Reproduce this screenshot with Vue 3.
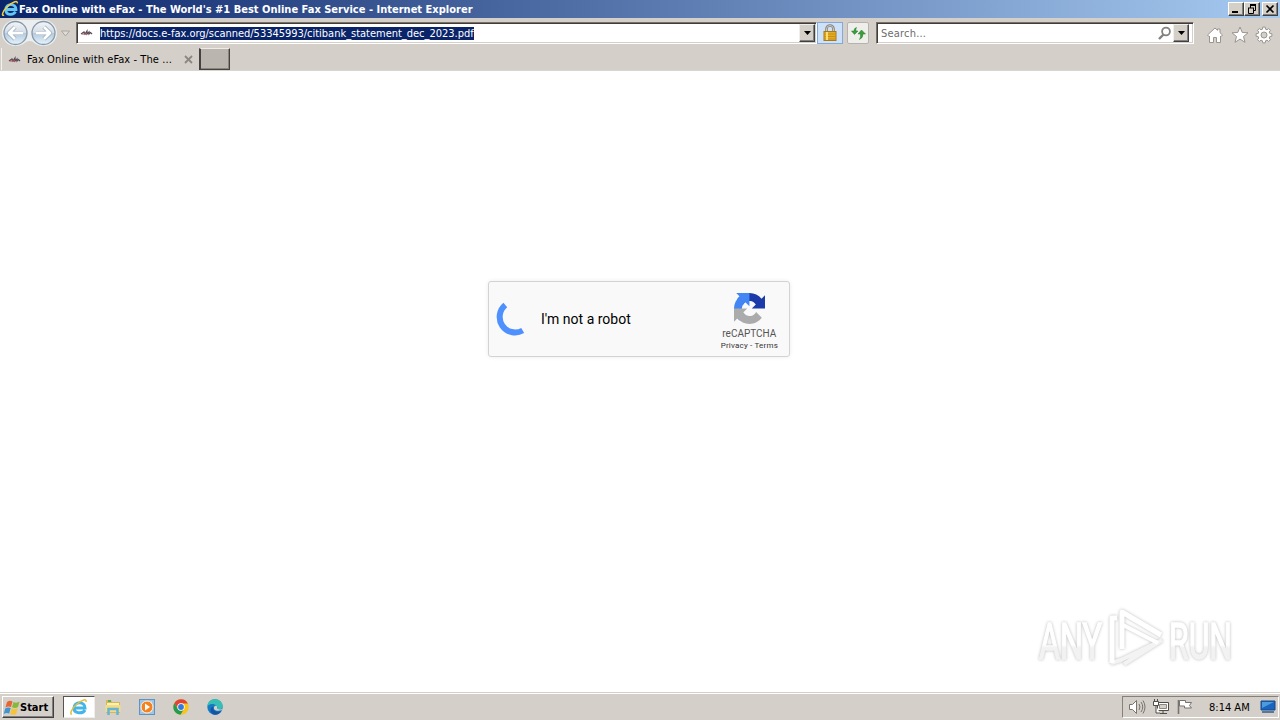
<template>
    <div class="screen">
        <!-- Title bar -->
        <header class="titlebar">
            <svg class="title-icon" width="18" height="18" viewBox="0 0 18 18">
                <path d="M5 9.5H15C15 2.7 4.8 3 4.8 9.7c0 5.7 7.6 6 9.6 2" fill="none" stroke="#62c5f4" stroke-width="2.8" />
                <path d="M3 15C.4 16.7 1 11.7 6 7 11 2 17-.2 16.3 3.3" fill="none" stroke="#f5ce3e" stroke-width="1.5" />
            </svg>
            <span class="title-text">{{ title }} - Internet Explorer</span>
            <div class="window-buttons">
                <button class="win-btn">
                    <svg width="14" height="12"><path d="M3 9h6" stroke="#000" stroke-width="2" /></svg>
                </button>
                <button class="win-btn restore">
                    <svg width="14" height="12"><path d="M5 1.5h6M5 2.5h6M5.5 2v3M10.5 2v5.5H9M3 5h6M3.5 5v5.5h5V5" fill="none" stroke="#000" /></svg>
                </button>
                <button class="win-btn">
                    <svg width="14" height="12"><path d="M3.5 2.5l7 7M10.5 2.5l-7 7" stroke="#000" stroke-width="1.7" /></svg>
                </button>
            </div>
        </header>

        <!-- Address row -->
        <div class="toolbar">
            <svg class="nav-buttons" width="76" height="30" viewBox="0 0 76 30">
                <defs>
                    <linearGradient id="navFill" x1="0" y1="0" x2="0" y2="1">
                        <stop offset="0" stop-color="#f4f6f8" />
                        <stop offset=".48" stop-color="#d5dde5" />
                        <stop offset=".5" stop-color="#b4c8dc" />
                        <stop offset="1" stop-color="#e5f5fc" />
                    </linearGradient>
                </defs>
                <path d="M15 2h29a13 13 0 0 1 0 26q-7 0-11-4-3-2-7 0-4 4-11 4a13 13 0 0 1 0-26" fill="#eceff0" />
                <circle cx="15.500" cy="15" r="11.500" fill="url(#navFill)" stroke="#8799ac" stroke-width="1.300" />
                <circle cx="43.500" cy="15" r="11.500" fill="url(#navFill)" stroke="#8799ac" stroke-width="1.300" />
                <g fill="none" stroke-linejoin="round">
                    <path d="M23 15H9m6-6-6 6 6 6M36 15h14m-6-6 6 6-6 6" stroke="#92a8bf" stroke-width="4.200" />
                    <path d="M23 15H9m6-6-6 6 6 6M36 15h14m-6-6 6 6-6 6" stroke="#fff" stroke-width="2.800" />
                </g>
                <path d="M61.500 13h8l-4 5z" fill="#dfdcd7" stroke="#aaa59f" />
            </svg>
            <div class="field address">
                <svg class="favicon" width="14" height="8" viewBox="0 0 14 8">
                    <path d="M1 5l3-2 1 2 2-3v3l2-2v2l1.500-1.500L12 5" fill="none" stroke="#584a57" stroke-width="1.200" />
                    <path d="M2 5h5" stroke="#b14b50" />
                </svg>
                <span class="url">{{ url }}</span>
                <button class="drop"><svg width="7" height="4"><path d="M0 0h7L3.500 4z" /></svg></button>
            </div>
            <button class="tool lock">
                <svg width="16" height="18" viewBox="0 0 16 18">
                    <path d="M4.500 8V5a3.500 3.500 0 0 1 7 0v3" fill="none" stroke="#858078" stroke-width="2.600" />
                    <path d="M4.500 8V5a3.500 3.500 0 0 1 7 0v3" fill="none" stroke="#dedbd0" stroke-width=".8" />
                    <rect x="2" y="7.500" width="12" height="9" fill="#e6ad24" stroke="#a8791a" />
                    <path d="M2.500 10h11M2.500 12.500h11M2.500 15h11" stroke="#c48f1b" />
                    <path d="M5 8v8" stroke="#ffdc70" stroke-width="2" />
                </svg>
            </button>
            <button class="tool refresh">
                <svg width="16" height="16" viewBox="0 0 16 16">
                    <path d="M6.500 2.500Q4 3 4 6H1.500L4.500 9.500 8 6H6Q5.500 4 6.500 2.500zM9.500 14.500Q13 13 13 9h2.500L11.500 5 8 9h2.500Q11 12 9.500 14.500z" fill="#3b9c3d" stroke="#267e2b" stroke-width=".5" />
                </svg>
            </button>
            <div class="field search">
                <span class="placeholder">Search...</span>
                <svg class="magnifier" width="15" height="15" viewBox="0 0 15 15">
                    <circle cx="9" cy="5.500" r="3.900" fill="#fff" stroke="#85817f" stroke-width="1.800" />
                    <path d="M6.500 8.500L2 13" stroke="#85817f" stroke-width="2.400" />
                </svg>
                <button class="drop"><svg width="7" height="4"><path d="M0 0h7L3.500 4z" /></svg></button>
            </div>
            <div class="commands">
                <svg width="18" height="18" viewBox="0 0 18 18">
                    <path d="M1.500 9L9 2l2.500 2.300V3H14v3.700L16.500 9 15 10.500l-.5-.5v6.500h-4v-5h-3v5h-4V10l-.5.5z" fill="#fff" stroke="#99948f" />
                </svg>
                <svg width="18" height="18" viewBox="0 0 18 18">
                    <path d="M9 1l2.200 5.400 5.800.4-4.500 3.700 1.500 5.800L9 13.100l-5 3.200 1.500-5.800L1 6.800l5.800-.4z" fill="#fff" stroke="#99948f" />
                </svg>
                <svg width="18" height="18" viewBox="0 0 18 18">
                    <path :d="gear" fill="#fff" stroke="#99948f" stroke-linejoin="round" />
                    <circle cx="9" cy="9" r="3" fill="#d4d0c8" stroke="#99948f" />
                </svg>
            </div>
        </div>

        <!-- Tabs -->
        <div class="tabs">
            <div class="tab">
                <svg class="favicon" width="14" height="8" viewBox="0 0 14 8">
                    <path d="M1 5l3-2 1 2 2-3v3l2-2v2l1.500-1.500L12 5" fill="none" stroke="#584a57" stroke-width="1.200" />
                    <path d="M2 5h5" stroke="#b14b50" />
                </svg>
                <span class="tab-title">Fax Online with eFax - The ...</span>
                <svg class="tab-close" width="9" height="9"><path d="M1 1l7 7M8 1L1 8" stroke="#8b8783" stroke-width="1.800" /></svg>
            </div>
            <div class="new-tab"></div>
        </div>

        <!-- Page -->
        <main class="page">
            <div class="captcha">
                <svg class="spinner" width="38" height="38" viewBox="0 0 38 38">
                    <path d="M10.300 5A15.500 15.500 0 0 0 27.700 30.500" fill="none" stroke="#4d90fe" stroke-width="6" />
                </svg>
                <span class="captcha-label">I'm not a robot</span>
                <div class="brand">
                    <svg width="31" height="31" viewBox="0 0 64 64">
                        <path d="M64 31.955l-.033-1.370V4.687l-7.160 7.160C50.948 4.674 42.033.093 32.050.093c-10.400 0-19.622 4.960-25.458 12.640l11.736 11.860a15.550 15.550 0 0 1 4.754-5.334c2.050-1.600 4.952-2.906 8.968-2.906.485 0 .86.057 1.135.163 4.976.393 9.288 3.140 11.828 7.124l-8.307 8.307z" fill="#1c3aa9" />
                        <path d="M31.862.094l-1.370.033H4.594l7.160 7.160C4.580 13.147 0 22.060 0 32.046c0 10.400 4.960 19.622 12.640 25.458L24.500 45.768a15.550 15.550 0 0 1-5.334-4.754c-1.600-2.050-2.906-4.952-2.906-8.968 0-.485.057-.86.163-1.135.393-4.976 3.140-9.288 7.124-11.828l8.307 8.307z" fill="#4285f4" />
                        <path d="M.001 32.045l.033 1.370v25.898l7.160-7.160c5.860 7.173 14.774 11.754 24.760 11.754 10.400 0 19.622-4.960 25.458-12.640l-11.736-11.860a15.550 15.550 0 0 1-4.754 5.334c-2.050 1.600-4.952 2.906-8.968 2.906-.485 0-.86-.057-1.135-.163-4.976-.393-9.288-3.140-11.828-7.124l8.307-8.307z" fill="#ababab" />
                    </svg>
                    <span class="brand-name">reCAPTCHA</span>
                    <span class="brand-links">Privacy - Terms</span>
                </div>
            </div>
            <svg class="watermark" width="220" height="76" viewBox="0 0 220 76">
                <defs>
                    <linearGradient id="markFill" x1="0" y1="0" x2="0" y2="1">
                        <stop offset=".55" stop-color="#fff" />
                        <stop offset=".6" stop-color="#f2f2f2" />
                    </linearGradient>
                </defs>
                <g class="mark-text">
                    <text x="9" y="56" textLength="63" lengthAdjust="spacingAndGlyphs">ANY</text>
                    <text x="139" y="56" textLength="63" lengthAdjust="spacingAndGlyphs">RUN</text>
                </g>
                <g class="mark-play" fill="none" stroke-linejoin="round">
                    <path d="M94 61l38-24M81 60l10-3 35-17" stroke="#f3f3f3" stroke-width="4" />
                    <path d="M87 15h-5v45M92 46V9l39 23" stroke="#fff" stroke-width="5" />
                    <path d="M93 22l35 18" stroke="#fff" stroke-width="4" />
                </g>
            </svg>
        </main>

        <!-- Taskbar -->
        <footer class="taskbar">
            <button class="start">
                <svg width="18" height="17" viewBox="0 0 18 17">
                    <path d="M4 3q3-2 5.500-.5L8 8Q5 7 2.500 8.500z" fill="#ea6332" />
                    <path d="M10.500 3q3 1.500 6-.5L15 8q-3 1.700-6 .2z" fill="#86b93b" />
                    <path d="M2.200 9.500Q5 8 7.700 9l-1.500 5.500q-3-1.200-5.500.5z" fill="#4094d1" />
                    <path d="M8.700 9.300q3 1.500 6-.2L13.200 15q-3 1.700-6 0z" fill="#f5c438" />
                </svg>
                <span>Start</span>
            </button>
            <div class="launch active">
                <svg width="20" height="20" viewBox="0 0 20 20">
                    <path d="M5 11h11C16 4 5 4 5 11c0 6 9 6 11 2" fill="none" stroke="#43b5e8" stroke-width="3" />
                    <path d="M3 17c-3 1 0-6 5-10S18 1 17 5" fill="none" stroke="#e5bd3b" stroke-width="1.500" />
                </svg>
            </div>
            <div class="launch">
                <svg width="18" height="18" viewBox="0 0 18 18">
                    <path d="M2 2h5l1 2h8v11H2z" fill="#d7b757" />
                    <path d="M3 5h12v3H3z" fill="#fff1b1" />
                    <path d="M1.500 7h15v7h-15z" fill="#f5dc84" />
                    <path d="M4.500 17v-6h9v6" fill="none" stroke="#62b5d8" stroke-width="2.500" />
                    <path d="M4 3h3" stroke="#66aa61" stroke-width="2" />
                </svg>
            </div>
            <div class="launch">
                <svg width="18" height="18" viewBox="0 0 18 18">
                    <rect x="1.500" y="1.500" width="15" height="15" fill="#9fc5e6" stroke="#5c94c4" />
                    <path d="M3 14L14 3v11z" fill="#d5e8f5" />
                    <circle cx="9" cy="9" r="6" fill="#f58220" stroke="#fff0d8" />
                    <path d="M7 5.500v7l5-3.500z" fill="#fff" />
                </svg>
            </div>
            <div class="launch">
                <svg width="16" height="16" viewBox="0 0 16 16">
                    <circle cx="8" cy="8" r="7.700" fill="#f8c51c" />
                    <path d="M1.300 4.200A7.700 7.700 0 0 1 14.900 4.500H8A3.600 3.600 0 0 0 4.700 9.500z" fill="#e04436" />
                    <path d="M1.300 4.200A7.700 7.700 0 0 0 7.500 15.700l3.600-6A3.600 3.600 0 0 1 4.700 9.500z" fill="#249b50" />
                    <circle cx="8" cy="8" r="3.700" fill="#fff" />
                    <circle cx="8" cy="8" r="2.900" fill="#3579dc" />
                </svg>
            </div>
            <div class="launch">
                <svg width="16" height="16" viewBox="0 0 16 16">
                    <circle cx="8" cy="8" r="7.700" fill="#147bc5" />
                    <path d="M.4 7C1 2 4.500.3 8 .3c5 0 7.700 3.500 7.700 6.700 0 3-3 4-5.700 3.500C12 6 5 2.500.4 7z" fill="#37bfb6" />
                    <path d="M6.500 7.500C5 12 10 14 14.500 12a7.700 7.700 0 0 1-8 3.500C2 13 3 8 6.500 7.500z" fill="#1555a4" />
                    <path d="M7 8c-1 3 3 5 8 3l1-1c-3 1-6.500.5-6-1.500C10.500 6.500 8 6 7 8z" fill="#d4d0c8" />
                </svg>
            </div>
            <div class="tray">
                <svg class="speaker" width="18" height="18" viewBox="0 0 18 18">
                    <path d="M1.500 6.500h3l4-4v13l-4-4h-3z" fill="#fff" stroke="#77736e" />
                    <path d="M11 6q2 3 0 6M13 4q3.500 5 0 10M15 2.500q4 6.500 0 13" fill="none" stroke="#77736e" />
                </svg>
                <svg class="network" width="18" height="18" viewBox="0 0 18 18">
                    <path d="M5.500 4.500h11v8h-11zM8 15.500h7M11 13v2" fill="#fff" stroke="#504d49" />
                    <path d="M7.500 6.500h7v4h-7z" fill="#d4d0c8" stroke="#8a8680" />
                    <path d="M1.500 3.500h5v4h-5zM2.500 1v2M5.500 1v2M4 8v7h4" fill="#fff" stroke="#504d49" />
                </svg>
                <svg class="flag" width="18" height="18" viewBox="0 0 18 18">
                    <path d="M2.500 2v14" stroke="#77736e" stroke-width="1.600" />
                    <path d="M3.500 2.500h6v2h6l-2 3 2 2.500h-7v-2h-5z" fill="#fff" stroke="#77736e" />
                </svg>
                <span class="clock">8:14 AM</span>
                <svg class="desktop" width="16" height="14" viewBox="0 0 16 14">
                    <path d="M1 1h14v9H1z" fill="#1765bc" stroke="#174987" />
                    <path d="M2 2h12L2 8z" fill="#4d9ae0" />
                    <path d="M2 12h12" stroke="#58789d" stroke-width="2" />
                </svg>
            </div>
        </footer>
    </div>
</template>

<script setup>
import { computed, ref } from 'vue';

const title = ref("Fax Online with eFax - The World's #1 Best Online Fax Service");
const url = ref('https://docs.e-fax.org/scanned/53345993/citibank_statement_dec_2023.pdf');

// Eight teeth, four points for each
const gear = computed(() => {
    const points = [];
    for (let i = 0; i < 8; i++) {
        for (const [offset, r] of [[-15, 6], [-9, 8], [9, 8], [15, 6]]) {
            const a = (i * 45 + offset) * Math.PI / 180;
            points.push(`${9 + r * Math.cos(a)} ${9 + r * Math.sin(a)}`);
        }
    }
    return `M${points.join('L')}z`;
});
</script>

<style>
body {
    margin: 0;
    overflow: hidden;
}
</style>

<style scoped>
.screen {
    width: 1280px;
    height: 720px;
    display: flex;
    flex-direction: column;
    background: #d4cfc8;
    font: 11px "DejaVu Sans Condensed", "DejaVu Sans", sans-serif;
    font-stretch: condensed;
    color: #000;
}

.screen * {
    box-sizing: border-box;
}

svg {
    display: block;
    flex: none;
}

button {
    padding: 0;
    margin: 0;
    font: inherit;
    color: inherit;
    border-radius: 0;
}

span {
    white-space: nowrap;
}

/* Title bar */
.titlebar {
    height: 18px;
    display: flex;
    align-items: center;
    padding: 0 2px 0 1px;
    background: linear-gradient(90deg, #0a246a, #a6caf0);
    color: #fff;
}

.title-text {
    font-weight: bold;
    letter-spacing: 0.01px;
}

.window-buttons {
    display: flex;
    margin-left: auto;
}

.win-btn {
    width: 16px;
    height: 14px;
    background: #d4d0c8;
    border: 1px solid;
    border-color: #fff #404040 #404040 #fff;
    box-shadow: inset -1px -1px #808080;
}

.restore {
    margin-right: 2px;
}

/* Address row */
.toolbar {
    height: 30px;
    display: flex;
    align-items: center;
}

.field {
    height: 22px;
    display: flex;
    align-items: center;
    background: #fff;
    border: 1px solid;
    border-color: #777068 #fff #fff #777068;
    box-shadow: inset 1px 1px #403c38, inset -1px -1px #d4cfc8;
}

.address {
    width: 741px;
    padding: 0 1px 0 3px;
}

.url {
    margin: 1px 0 0 6px;
    height: 13px;
    line-height: 13px;
    background: #0a246a;
    color: #fff;
    letter-spacing: -0.020px;
}

.drop {
    width: 16px;
    height: 18px;
    margin-left: auto;
    display: flex;
    align-items: center;
    justify-content: center;
    background: #d4d0c8;
    border: 1px solid;
    border-color: #eee #404040 #404040 #eee;
    box-shadow: inset -1px -1px #808080;
}

.tool {
    height: 22px;
    display: flex;
    align-items: center;
    justify-content: center;
}

.lock {
    width: 26px;
    background: #cde1f8;
    border: 1px solid #83a9d8;
}

.refresh {
    width: 22px;
    margin-left: 4px;
    background: #eeeeeb;
    border: 1px solid #b6b2ad;
    border-radius: 2px;
}

.search {
    width: 318px;
    margin-left: 7px;
    padding: 0 4px 0 4px;
}

.placeholder {
    margin-top: 1px;
    color: #6d6d6d;
    letter-spacing: 0.2px;
}

.magnifier {
    margin-left: auto;
}

.search .drop {
    margin-left: 1px;
}

.commands {
    display: flex;
    gap: 6.500px;
    margin: 3px 0 0 12px;
}

/* Tabs */
.tabs {
    height: 23px;
    display: flex;
    border-bottom: 1px solid #d9d5cf;
}

.tab {
    width: 199px;
    display: flex;
    align-items: center;
    padding: 1px 0 0 6px;
    border-left: 1px solid #f4f2ee;
    margin-left: 1px;
    margin-right: -1px;
}

.tab-title {
    margin-left: 5px;
    letter-spacing: 0.080px;
}

.tab-close {
    margin-left: 12px;
}

.new-tab {
    width: 31px;
    height: 22px;
    background: #bbb5b0;
    border: 1px solid #45413e;
    border-top-color: #eeeae5;
    border-left-width: 2px;
    box-shadow: inset -1px -1px #8b8580;
}

/* Page */
.page {
    flex: 1;
    position: relative;
    display: flex;
    align-items: flex-start;
    justify-content: center;
    padding: 210px 2px 0 0;
    background: #fff;
}

.captcha {
    width: 302px;
    height: 76px;
    display: flex;
    align-items: center;
    padding: 0 11px 0 6px;
    background: #f9f9f9;
    border: 1px solid #d3d3d3;
    border-radius: 3px;
    box-shadow: 0 0 4px rgba(0, 0, 0, 0.08);
    font-family: Roboto, sans-serif;
    font-stretch: normal;
}

.captcha-label {
    margin-left: 8px;
    font-size: 14px;
}

.brand {
    margin-left: auto;
    padding-top: 5px;
    display: flex;
    flex-direction: column;
    align-items: center;
    color: #555;
}

.brand-name {
    margin-top: 4px;
    font-size: 10px;
    line-height: 12px;
}

.brand-links {
    font-size: 8px;
    line-height: 11px;
    color: #333;
    letter-spacing: 0.2px;
}

.watermark {
    position: absolute;
    left: 1030px;
    top: 532px;
    filter: drop-shadow(0 0 1.500px rgba(0, 0, 0, 0.27));
}

.mark-text {
    font: 50px Roboto, sans-serif;
    fill: url(#markFill);
    stroke: url(#markFill);
    stroke-width: 1.5px;
}

/* Taskbar */
.taskbar {
    height: 28px;
    display: flex;
    align-items: center;
    padding: 1px 1px 0 2px;
    border-top: 1px solid #d4cfc8;
    box-shadow: inset 0 1px #fff;
}

.start {
    width: 52px;
    height: 22px;
    display: flex;
    align-items: center;
    margin-right: 9px;
    background: #d4cfc8;
    border: 1px solid;
    border-color: #fff #404040 #404040 #fff;
    box-shadow: inset -1px -1px #808080;
    font-weight: bold;
    letter-spacing: 0;
}

.start span {
    margin-left: -1px;
}

.launch {
    width: 32px;
    height: 22px;
    display: flex;
    align-items: center;
    justify-content: center;
    margin-right: 2px;
}

.active {
    background: #fff;
    border: 1px solid;
    border-color: #555 #eee #eee #555;
}

.tray {
    width: 157px;
    height: 22px;
    display: flex;
    align-items: center;
    margin-left: auto;
    padding: 0 2px 0 5px;
    border: 1px solid;
    border-color: #858079 #fff #fff #858079;
}

.network {
    margin-left: 6px;
}

.flag {
    margin-left: 6px;
}

.clock {
    margin-left: 15px;
    letter-spacing: 0;
}

.desktop {
    margin-left: auto;
}
</style>
